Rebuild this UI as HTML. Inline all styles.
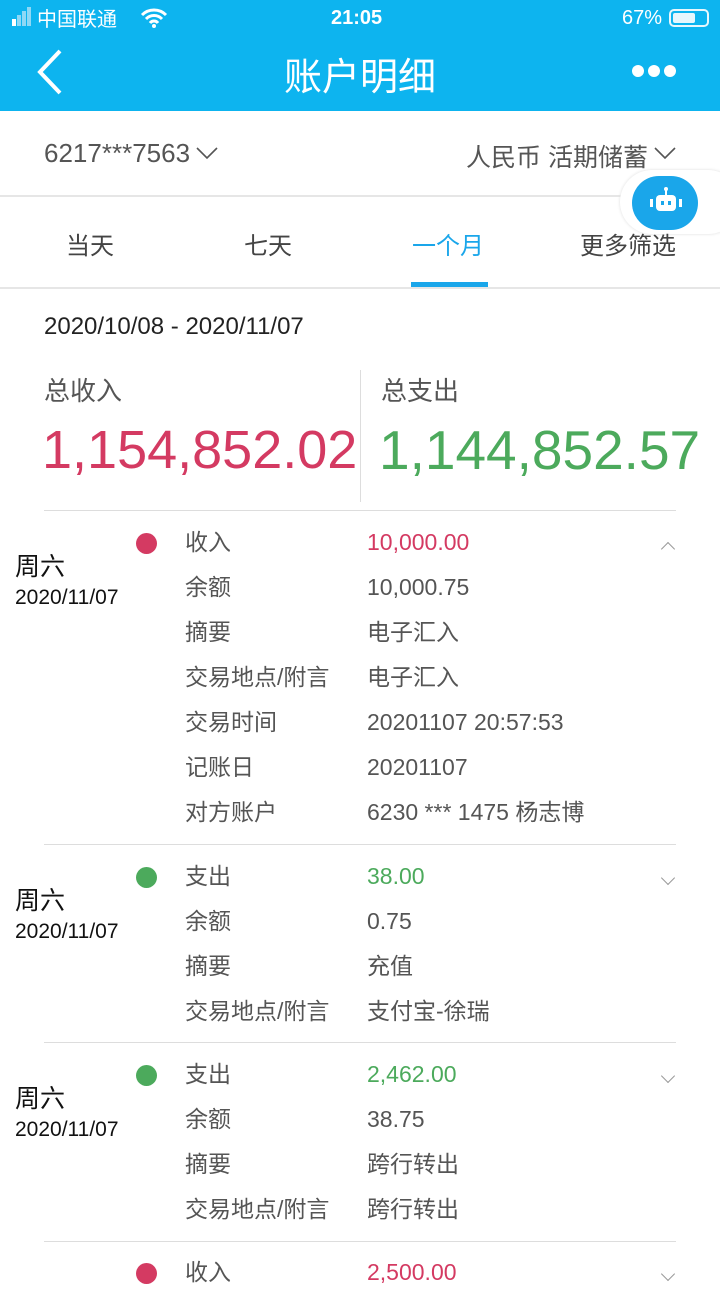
<!DOCTYPE html><html><head><meta charset="utf-8"><style>
*{margin:0;padding:0;box-sizing:border-box}
body{width:720px;height:1280px;overflow:hidden;background:#fff;font-family:"Liberation Sans","Noto Sans CJK SC",sans-serif;position:relative;color:#333}
.a{position:absolute;white-space:nowrap}
.hd{position:absolute;left:0;top:0;width:720px;height:111px;background:#0db4ef;color:#fff}
.dot{position:absolute;left:136px;width:21px;height:21px;border-radius:50%}
.hr{position:absolute;left:44px;width:632px;height:1px;background:#ddd}
.day{font-size:25px;color:#111;line-height:30px}.dt{font-size:21px;color:#111;line-height:26px}
.chev{position:absolute;left:663px;width:10px;height:10px;border-right:1px solid #999;border-bottom:1px solid #999;transform:rotate(45deg)}
.rows{line-height:45px;font-size:23px;color:#555}
.r{color:#d43a62}.g{color:#4caa5c}
</style></head><body>
<div class="hd">
<div class="a" style="left:12px;top:7px;font-size:20px;line-height:24px">
<span style="display:inline-block;width:4px;height:7px;background:#fff;margin-right:1px"></span><span style="display:inline-block;width:4px;height:11px;background:#8fd8f5;margin-right:1px"></span><span style="display:inline-block;width:4px;height:15px;background:#8fd8f5;margin-right:1px"></span><span style="display:inline-block;width:4px;height:19px;background:#8fd8f5;margin-right:6px"></span>中国联通</div>
<svg class="a" style="left:140px;top:8px" width="28" height="20" viewBox="0 0 28 20"><path d="M2 7a17 17 0 0 1 24 0M6 11a11 11 0 0 1 16 0M10 15a5 5 0 0 1 8 0" stroke="#fff" stroke-width="3" fill="none"/><circle cx="14" cy="18" r="2" fill="#fff"/></svg>
<div class="a" style="left:331px;top:7px;font-size:20px;font-weight:bold">21:05</div>
<div class="a" style="left:622px;top:7px;font-size:20px">67%</div>
<div class="a" style="left:669px;top:9px;width:40px;height:18px;border:2px solid #fff;border-radius:5px;opacity:.9"><div style="margin:2px;width:22px;height:10px;background:#fff;border-radius:2px"></div></div>
<svg class="a" style="left:34px;top:48px" width="30" height="48"><path d="M26 3L6 24L26 45" stroke="#fff" stroke-width="4" fill="none"/></svg>
<div class="a" style="left:0;width:720px;text-align:center;top:46px;font-size:38px">账户明细</div>
<div class="a" style="left:632px;top:64px"><span style="display:inline-block;width:12px;height:12px;border-radius:50%;background:#fff;margin-right:4px"></span><span style="display:inline-block;width:12px;height:12px;border-radius:50%;background:#fff;margin-right:4px"></span><span style="display:inline-block;width:12px;height:12px;border-radius:50%;background:#fff"></span></div>
</div>
<div class="a" style="left:44px;top:138px;font-size:26px;color:#555">6217***7563</div>
<svg class="a" style="left:196px;top:146px" width="22" height="14"><path d="M1 2L11 12L21 2" stroke="#555" stroke-width="1.6" fill="none"/></svg>
<div class="a" style="left:466px;top:138px;font-size:25px;color:#555">人民币 活期储蓄</div>
<svg class="a" style="left:654px;top:146px" width="22" height="14"><path d="M1 2L11 12L21 2" stroke="#555" stroke-width="1.6" fill="none"/></svg>
<div class="a" style="left:0;top:195px;width:720px;height:2px;background:#e6e6e6"></div>
<div class="a" style="left:620px;top:170px;width:120px;height:64px;border-radius:32px;background:#fff;box-shadow:0 0 3px #ddd"></div>
<div class="a" style="left:632px;top:176px;width:66px;height:54px;border-radius:27px;background:#1aa6ea"></div>
<svg class="a" style="left:645px;top:186px" width="42" height="34"><rect x="11" y="9" width="20" height="16" rx="4" fill="#fff"/><line x1="21" y1="2" x2="21" y2="9" stroke="#fff" stroke-width="2"/><circle cx="21" cy="3" r="2" fill="#fff"/><rect x="16" y="15" width="3" height="4" fill="#1aa6ea"/><rect x="23" y="15" width="3" height="4" fill="#1aa6ea"/><rect x="5" y="13" width="3" height="8" fill="#fff"/><rect x="34" y="13" width="3" height="8" fill="#fff"/></svg>
<div class="a" style="left:66px;top:226px;font-size:24px;color:#444">当天</div>
<div class="a" style="left:244px;top:226px;font-size:24px;color:#444">七天</div>
<div class="a" style="left:412px;top:226px;font-size:24px;color:#1aa6ea">一个月</div>
<div class="a" style="left:580px;top:226px;font-size:24px;color:#444">更多筛选</div>
<div class="a" style="left:411px;top:282px;width:77px;height:5px;background:#1aa6ea"></div>
<div class="a" style="left:0;top:287px;width:720px;height:2px;background:#e6e6e6"></div>
<div class="a" style="left:44px;top:313px;font-size:24px;color:#222">2020/10/08 - 2020/11/07</div>
<div class="a" style="left:44px;top:371px;font-size:26px;color:#555">总收入</div>
<div class="a" style="left:381px;top:371px;font-size:26px;color:#555">总支出</div>
<div class="a r" style="left:42px;top:420px;font-size:54px;line-height:60px">1,154,852.02</div>
<div class="a g" style="left:379px;top:420px;font-size:55px;line-height:60px">1,144,852.57</div>
<div class="a" style="left:360px;top:370px;width:1px;height:132px;background:#ddd"></div>
<div class="hr" style="top:510px"></div>

<div class="dot" style="top:533px;background:#d43a62"></div>
<div class="a day" style="left:15px;top:552px">周六</div><div class="a dt" style="left:15px;top:585px">2020/11/07</div>
<div class="chev" style="top:544px;transform:rotate(225deg)"></div>
<div class="a rows" style="left:185px;top:520px">收入<br>余额<br>摘要<br>交易地点/附言<br>交易时间<br>记账日<br>对方账户</div>
<div class="a rows" style="left:367px;top:520px"><span class="r">10,000.00</span><br>10,000.75<br>电子汇入<br>电子汇入<br>20201107 20:57:53<br>20201107<br>6230 *** 1475 杨志博</div>
<div class="hr" style="top:844px"></div>

<div class="dot" style="top:867px;background:#4caa5c"></div>
<div class="a day" style="left:15px;top:886px">周六</div><div class="a dt" style="left:15px;top:919px">2020/11/07</div>
<div class="chev" style="top:873px"></div>
<div class="a rows" style="left:185px;top:854px">支出<br>余额<br>摘要<br>交易地点/附言</div>
<div class="a rows" style="left:367px;top:854px"><span class="g">38.00</span><br>0.75<br>充值<br>支付宝-徐瑞</div>
<div class="hr" style="top:1042px"></div>

<div class="dot" style="top:1065px;background:#4caa5c"></div>
<div class="a day" style="left:15px;top:1084px">周六</div><div class="a dt" style="left:15px;top:1117px">2020/11/07</div>
<div class="chev" style="top:1071px"></div>
<div class="a rows" style="left:185px;top:1052px">支出<br>余额<br>摘要<br>交易地点/附言</div>
<div class="a rows" style="left:367px;top:1052px"><span class="g">2,462.00</span><br>38.75<br>跨行转出<br>跨行转出</div>
<div class="hr" style="top:1241px"></div>

<div class="dot" style="top:1263px;background:#d43a62"></div>
<div class="chev" style="top:1269px"></div>
<div class="a rows" style="left:185px;top:1250px">收入</div>
<div class="a rows" style="left:367px;top:1250px"><span class="r">2,500.00</span></div>
</body></html>
